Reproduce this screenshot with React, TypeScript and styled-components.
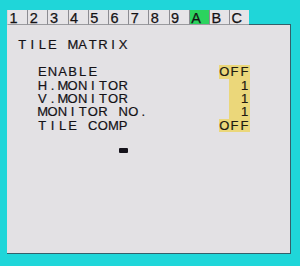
import React from 'react';
import styled, { createGlobalStyle } from 'styled-components';

// OSD character grid
const CELL = 10.1;
const ROW = 13.4;

const GlobalStyle = createGlobalStyle`
  html, body {
    margin: 0;
    padding: 0;
  }
  body {
    background: #1fd6d9;
    width: 300px;
    height: 266px;
    overflow: hidden;
    font-family: "Liberation Sans", Arial, sans-serif;
  }
`;

const Screen = styled.div`
  width: 300px;
  height: 266px;
  box-sizing: border-box;
  padding: 10px 0 0 7px;
  display: flex;
  flex-direction: column;
`;

const TabBar = styled.div`
  display: flex;
  width: 284px;
  height: 15px;
`;

const Tab = styled.div<{ $active?: boolean }>`
  width: ${CELL * 2}px;
  height: 15px;
  box-sizing: border-box;
  border-left: 1px solid #8c8c92;
  border-bottom: 1px solid #9a9a9e;
  background: ${p => (p.$active ? '#2bd35e' : '#e6e4e7')};
  color: #141214;
  font-size: 14.5px;
  line-height: 15px;
  padding: 1px 0 0 1.5px;
  -webkit-text-stroke: 0.25px #141214;

  &:first-child {
    border-left-color: #d8d6da;
  }
  &:last-child {
    border-right: 1px solid #34606a;
  }
`;

const TabFiller = styled.div`
  flex: 1;
  border-bottom: 1px solid #34606a;
`;

const Panel = styled.div`
  width: 284px;
  height: 229px;
  box-sizing: border-box;
  background: #e3e1e4;
  border-right: 1px solid #34606a;
  border-bottom: 1px solid #34606a;
  padding-top: 13.4px;
  display: flex;
  flex-direction: column;
`;

const Row = styled.div<{ $indent?: number }>`
  display: flex;
  align-items: flex-start;
  height: ${ROW}px;
  padding-left: ${p => (p.$indent ?? 0) * CELL}px;
  padding-right: ${CELL * 4}px;
  justify-content: space-between;
  color: #141116;
  font-size: 13px;
  line-height: ${ROW}px;
  -webkit-text-stroke: 0.2px #141116;
`;

const Field = styled.span<{ $width: number }>`
  display: flex;
  justify-content: flex-end;
  width: ${p => p.$width * CELL}px;
  height: ${ROW}px;
  background: #ebd77a;
  color: #221a10;
`;

const Char = styled.span`
  display: inline-block;
  width: ${CELL}px;
  text-align: center;
`;

const Chars = styled.span`
  display: inline-flex;
`;

const Cursor = styled.div`
  width: 9px;
  height: 5px;
  margin: 2px 0 0 ${CELL * 11 + 1}px;
  background: #15121a;
  border-radius: 1px;
`;

const OsdText = ({ text }: { text: string }) => (
  <Chars>
    {text.split('').map((c, i) => (
      <Char key={i}>{c === ' ' ? '\u00a0' : c}</Char>
    ))}
  </Chars>
);

const tabs = ['1', '2', '3', '4', '5', '6', '7', '8', '9', 'A', 'B', 'C'];

const items = [
  { label: 'ENABLE', value: 'OFF', width: 3 },
  { label: 'H.MONITOR', value: '1', width: 2 },
  { label: 'V.MONITOR', value: '1', width: 2 },
  { label: 'MONITOR NO.', value: '1', width: 2 },
  { label: 'TILE COMP', value: 'OFF', width: 3 },
];

const App = () => {
  return (
    <Screen>
      <GlobalStyle />
      <TabBar>
        {tabs.map(t => (
          <Tab key={t} $active={t === 'A'}>
            {t}
          </Tab>
        ))}
        <TabFiller />
      </TabBar>
      <Panel>
        <Row $indent={1}>
          <OsdText text="TILE MATRIX" />
        </Row>
        <Row />
        {items.map(it => (
          <Row key={it.label} $indent={3}>
            <OsdText text={it.label} />
            <Field $width={it.width}>
              <OsdText text={it.value} />
            </Field>
          </Row>
        ))}
        <Row />
        <Row>
          <Cursor />
        </Row>
      </Panel>
    </Screen>
  );
};

export default App;
